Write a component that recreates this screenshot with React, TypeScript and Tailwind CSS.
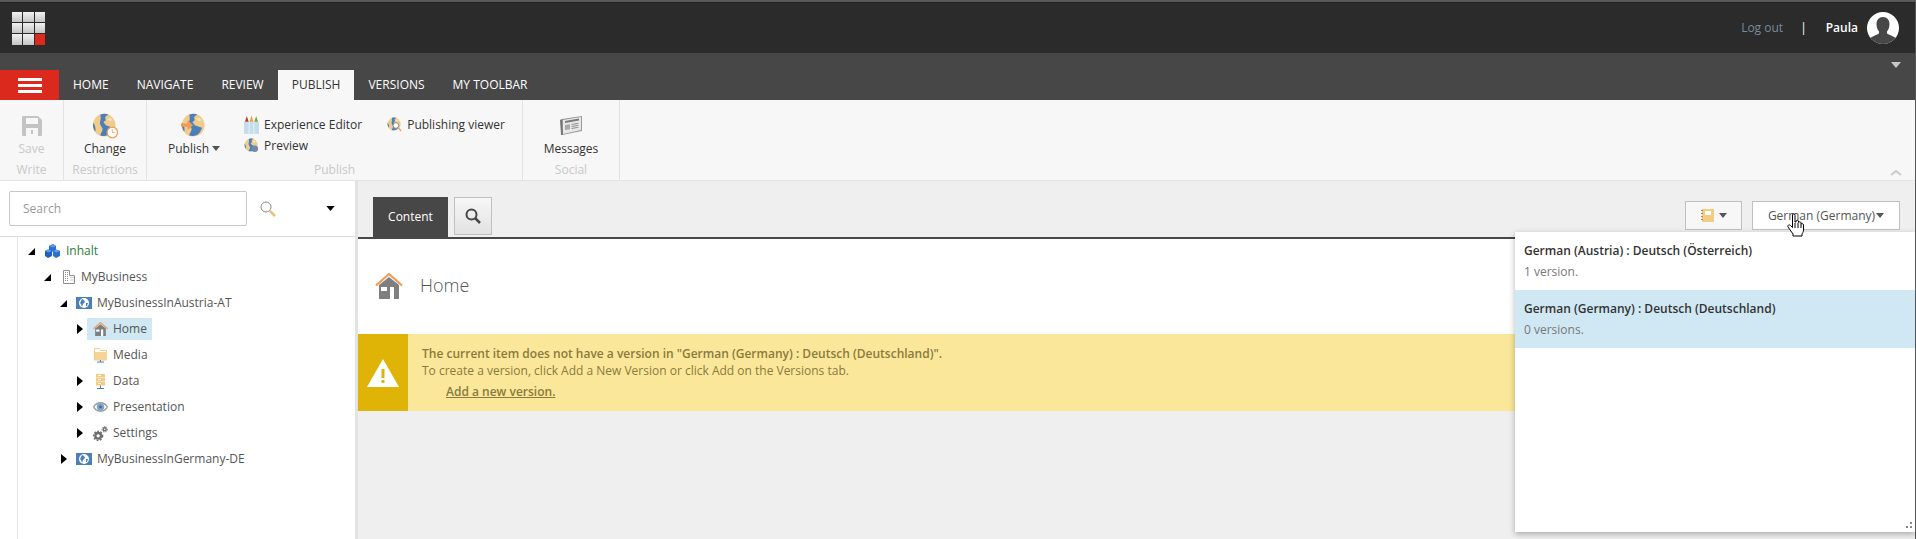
import React from 'react';

const Caret = ({ className = '' }: { className?: string }) => (
  <svg viewBox="0 0 10 6" className={className} fill="currentColor">
    <path d="M0 0h10L5 6z" />
  </svg>
);

const TreeArrow = ({ open }: { open: boolean }) =>
  open ? (
    <svg viewBox="0 0 7 7" className="w-[7px] h-[7px] text-black" fill="currentColor">
      <path d="M7 0v7H0z" />
    </svg>
  ) : (
    <svg viewBox="0 0 6 10" className="w-[6px] h-[10px] text-black" fill="currentColor">
      <path d="M0 0l6 5-6 5z" />
    </svg>
  );

const Globe = ({ className = '', children }: { className?: string; children?: React.ReactNode }) => (
  <svg viewBox="0 0 32 32" className={className}>
    <circle cx="15" cy="15" r="14" fill="#efcb8c" />
    <path d="M10 2c3-1.200 7-1.300 10-.3l-4 3.300 1 4-3 2 3 4 5 2 4 1c-1 3-3 6-5 8-3 2-8 3-11 1.500 1-3 3-5 3-8-1-3-4-5-3-9 1-3 1-6 0-8.500z" fill="#4b7fb9" />
    <path d="M1.500 12c-.8 4 .2 8 2.500 11 1-3 0-8-2.500-11z" fill="#4b7fb9" />
    <path d="M18 7l5-1 2 3-3 1z" fill="#f7e3bd" />
    {children}
  </svg>
);

const GridLogo = () => (
  <div className="grid grid-cols-3 gap-px w-[33px] h-[33px]">
    {[0, 1, 2, 3, 4, 5, 6, 7].map((i) => (
      <div key={i} className="bg-gradient-to-b from-[#f2f2f2] to-[#c4c4c4]" />
    ))}
    <div className="bg-[#dc291e]" />
  </div>
);

const SaveIcon = () => (
  <svg viewBox="0 0 20 20" className="w-[20px] h-[20px]" fill="#c4c4c4">
    <path d="M1 0h15l4 4v15a1 1 0 0 1-1 1H1a1 1 0 0 1-1-1V1a1 1 0 0 1 1-1z" />
    <rect x="4" y="2" width="12" height="6" fill="#f7f7f7" />
    <rect x="4" y="12" width="12" height="8" fill="#f7f7f7" />
    <rect x="9" y="14" width="2" height="4" fill="#c4c4c4" />
  </svg>
);

const Crayons = () => (
  <svg viewBox="0 0 16 20" className="w-[15px] h-[19px]">
    <rect x="0" y="7" width="16" height="13" fill="#c5dcec" />
    <rect x="5" y="7" width="1" height="13" fill="#e8f1f7" />
    <rect x="10" y="7" width="1" height="13" fill="#e8f1f7" />
    <path d="M1 7l2-6 2 6z" fill="#c8352b" />
    <path d="M6 7l2-7 2 7z" fill="#e3a92c" />
    <path d="M11 7l2-6 2 6z" fill="#7fa544" />
  </svg>
);

const NewsIcon = () => (
  <svg viewBox="0 0 24 22" className="w-[24px] h-[22px]">
    <path d="M3 4l20-3 0 15-20 4z" fill="#999" />
    <path d="M1 5l2-1 1 16-2 0z" fill="#777" />
    <path d="M4 5l18-3 0 13-18 4z" fill="#e8e8e8" />
    <path d="M6 6l14-2.500v2L6 8z" fill="#7a7a7a" />
    <path d="M6 10l5-.8v5l-5 .8z" fill="#a8a8a8" />
    <path d="M12.500 9l7-1.200v1l-7 1.200zM12.500 11l7-1.200v1l-7 1.200zM12.500 13l7-1.200v1l-7 1.200z" fill="#909090" />
  </svg>
);

const HomeIcon = ({ className = '' }: { className?: string }) => (
  <svg viewBox="0 0 28 26" className={className}>
    <path d="M4 12L14 4l10 8v14H4z" fill="#7f7f7f" />
    <rect x="6" y="14" width="6" height="4" fill="#fff" />
    <rect x="15" y="14" width="4" height="12" fill="#fff" />
    <path d="M1 12.500L14 1l13 11.500" fill="none" stroke="#ef9b57" strokeWidth="2.200" />
  </svg>
);

const CubesIcon = () => (
  <svg viewBox="0 0 15 14" className="w-[15px] h-[14px]">
    <path d="M4 2l4-2 3 2v4L8 8 4 6z" fill="#2a6fd0" />
    <path d="M0 7l3-1.500L7 7v5l-4 2-3-2z" fill="#1e5fc0" />
    <path d="M8 7l3-1.500L15 7v5l-4 2-3-2z" fill="#2a6fd0" />
    <path d="M4 2l4-2 3 2-3 1.500zM0 7l3-1.500L7 7 3.500 8.500zM8 7l3-1.500L15 7l-3.500 1.500z" fill="#5a9cec" />
  </svg>
);

const BuildingIcon = () => (
  <svg viewBox="0 0 12 14" className="w-[12px] h-[14px]">
    <path d="M.5 .5h6v5h5v8H.5z" fill="#fff" stroke="#8f8f8f" />
    <g fill="#8f8f8f">
      <rect x="2" y="2" width="1" height="1" />
      <rect x="4" y="2" width="1" height="1" />
      <rect x="2" y="4" width="1" height="1" />
      <rect x="4" y="4" width="1" height="1" />
      <rect x="2" y="6" width="1" height="1" />
      <rect x="4" y="6" width="1" height="1" />
      <rect x="7.500" y="7" width="1" height="1" />
      <rect x="9.500" y="7" width="1" height="1" />
      <rect x="2" y="8" width="1" height="1" />
      <rect x="4" y="8" width="1" height="1" />
      <rect x="7.500" y="9.500" width="1" height="1" />
      <rect x="9.500" y="9.500" width="1" height="1" />
      <rect x="2" y="10" width="1" height="1" />
      <rect x="4" y="10" width="1" height="1" />
    </g>
  </svg>
);

const SiteIcon = () => (
  <div className="w-[16px] h-[12px] bg-[#4a7fb9] flex items-center justify-center">
    <svg viewBox="0 0 10 10" className="w-[10px] h-[10px]">
      <circle cx="5" cy="5" r="5" fill="#fff" />
      <path d="M3 1l2 1 1 2-2 2-1 3-1-3-1-1zM7 5l2 0-1 3-1 0z" fill="#4a7fb9" />
    </svg>
  </div>
);

const FolderIcon = () => (
  <svg viewBox="0 0 13 15" className="w-[13px] h-[15px]">
    <path d="M.5 .5h5l1 2h6v9.500H.5z" fill="#fff" stroke="#f3cb82" />
    <path d="M1 4h12v8H1z" fill="#f6d495" />
    <path d="M6 12h1v1.500h3v1H3v-1h3z" fill="#4a7fb9" />
  </svg>
);

const DataIcon = () => (
  <svg viewBox="0 0 10 15" className="w-[10px] h-[15px]">
    <rect x="0" y="0" width="9" height="3.500" fill="#f3cb82" />
    <rect x="0" y="4" width="9" height="3.500" fill="#f3cb82" />
    <rect x="0" y="8" width="9" height="3.500" fill="#f3cb82" />
    <rect x="2" y="1" width="3" height="1" fill="#fff" />
    <rect x="2" y="5" width="3" height="1" fill="#fff" />
    <rect x="2" y="9" width="3" height="1" fill="#fff" />
    <path d="M4 11.500h1V14h3v1H1v-1h3z" fill="#4a7fb9" />
  </svg>
);

const EyeIcon = () => (
  <svg viewBox="0 0 16 12" className="w-[16px] h-[12px]">
    <path d="M0 6c3-7 13-7 16 0-3 7-13 7-16 0z" fill="#9a9a9a" />
    <path d="M1.500 6c3-5 10-5 13 0-3 5-10 5-13 0z" fill="#fff" />
    <circle cx="8" cy="6" r="4" fill="#7fa3c9" />
    <circle cx="8" cy="6" r="1.500" fill="#3f6d9f" />
  </svg>
);

const GearsIcon = () => (
  <svg viewBox="0 0 16 16" className="w-[15px] h-[15px]" fill="none" stroke="#6f6f6f">
    <circle cx="5.500" cy="10.500" r="3" strokeWidth="2.500" />
    <circle cx="5.500" cy="10.500" r="4.800" strokeWidth="1.500" strokeDasharray="2 1.500" />
    <circle cx="12.500" cy="3.500" r="1.600" strokeWidth="1.500" />
    <circle cx="12.500" cy="3.500" r="2.900" strokeWidth="1" strokeDasharray="1.500 1" />
  </svg>
);

const Magnifier = () => (
  <svg viewBox="0 0 16 16" className="w-[16px] h-[16px]" fill="none">
    <circle cx="6" cy="6" r="5" stroke="#8c8c8c" strokeWidth="1" />
    <path d="M10 10l5 5" stroke="#e8c27c" strokeWidth="2.500" />
  </svg>
);

const HandCursor = () => (
  <svg viewBox="0 0 18 24" className="w-[18px] h-[24px]" fill="#fff" stroke="#000" strokeWidth="1">
    <path d="M5.500 1.500c1-1 2.500-.5 2.500 1V9l1 0V8c1-1 2-1 2.500 0v1.500c1-1 2-.8 2.500 0V11c1-.8 2.500-.3 2.500 1v5c0 2-1 3-1.500 4v2h-9v-2L1 14c-.7-1.500 1-3 2.500-1.500l2 2z" />
    <path d="M8 10v5M11 10v5M14 11v4" fill="none" />
  </svg>
);

const tabs = ['HOME', 'NAVIGATE', 'REVIEW', 'PUBLISH', 'VERSIONS', 'MY TOOLBAR'];

const tree = [
  { label: 'Inhalt', indent: 'pl-[28px]', arrow: 'open', icon: <CubesIcon />, text: 'text-[#2a7d3c]', iconBox: 'w-[15px] ml-[10px] mr-[6px]' },
  { label: 'MyBusiness', indent: 'pl-[44px]', arrow: 'open', icon: <BuildingIcon />, text: 'text-[#555]', iconBox: 'w-[12px] ml-[12px] mr-[6px]' },
  { label: 'MyBusinessInAustria-AT', indent: 'pl-[60px]', arrow: 'open', icon: <SiteIcon />, text: 'text-[#555]', iconBox: 'w-[16px] ml-[9px] mr-[5px]' },
  { label: 'Home', indent: 'pl-[76px]', arrow: 'closed', icon: <HomeIcon className="w-[15px] h-[14px]" />, text: 'text-[#555]', iconBox: 'w-[15px] ml-[10px] mr-[5px]', active: true },
  { label: 'Media', indent: 'pl-[76px]', arrow: 'none', icon: <FolderIcon />, text: 'text-[#555]', iconBox: 'w-[15px] ml-[10px] mr-[5px]' },
  { label: 'Data', indent: 'pl-[76px]', arrow: 'closed', icon: <DataIcon />, text: 'text-[#555]', iconBox: 'w-[15px] ml-[10px] mr-[5px]' },
  { label: 'Presentation', indent: 'pl-[76px]', arrow: 'closed', icon: <EyeIcon />, text: 'text-[#555]', iconBox: 'w-[15px] ml-[10px] mr-[5px]' },
  { label: 'Settings', indent: 'pl-[76px]', arrow: 'closed', icon: <GearsIcon />, text: 'text-[#555]', iconBox: 'w-[15px] ml-[10px] mr-[5px]' },
  { label: 'MyBusinessInGermany-DE', indent: 'pl-[60px]', arrow: 'closed', icon: <SiteIcon />, text: 'text-[#555]', iconBox: 'w-[16px] ml-[9px] mr-[5px]' },
];

const RibbonGroup = ({ label, className, children }: { label: string; className: string; children: React.ReactNode }) => (
  <div className={`flex flex-col border-r border-[#e3e3e3] ${className}`}>
    <div className="flex-1 flex">{children}</div>
    <div className="h-[20px] text-center text-[12px] leading-[20px] text-[#c8c8c8]">{label}</div>
  </div>
);

const BigButton = ({ icon, label, className = '' }: { icon: React.ReactNode; label: React.ReactNode; className?: string }) => (
  <div className={`flex flex-col items-center pt-[12px] ${className}`}>
    <div className="h-[27px] flex items-center justify-center">{icon}</div>
    <div className="mt-px text-[12px] leading-[17px] whitespace-nowrap">{label}</div>
  </div>
);

const SmallButton = ({ icon, label }: { icon: React.ReactNode; label: string }) => (
  <div className="flex items-center h-[21px] text-[12px] text-[#333] whitespace-nowrap">
    <div className="w-[16px] mr-[5px] flex justify-center">{icon}</div>
    {label}
  </div>
);

export default function App() {
  return (
    <div className="relative w-[1916px] h-[539px] overflow-hidden flex flex-col bg-[#efefef] border-r border-[#555] font-['Open_Sans',sans-serif]">
      {/* top bar */}
      <div className="h-[3px] bg-[#5a5a5a] border-b border-[#222]" />
      <div className="h-[50px] bg-[#2b2b2b] flex items-center pl-[12px] pr-[16px] shrink-0">
        <GridLogo />
        <div className="ml-auto flex items-center">
          <span className="text-[12px] text-[#7d8a94]">Log out</span>
          <span className="ml-[17px] text-[12px] text-white">|</span>
          <span className="ml-[19px] text-[12px] font-semibold text-white">Paula</span>
          <div className="ml-[9px] w-[32px] h-[32px] rounded-full bg-white overflow-hidden">
            <svg viewBox="0 0 32 32" className="w-[32px] h-[32px]" fill="#474747">
              <path d="M16 5c4 0 6.500 3 6.500 7 0 3-1 5.500-2.500 7.500v2c2 1.500 6 2.500 9 4.500v6H3v-6c3-2 7-3 9-4.500v-2c-1.500-2-2.500-4.500-2.500-7.500 0-4 2.500-7 6.500-7z" />
            </svg>
          </div>
        </div>
      </div>

      {/* ribbon tabs */}
      <div className="relative h-[47px] bg-[#474747] flex items-end shrink-0">
        <div className="w-[59px] h-[30px] bg-[#dc291e] flex flex-col items-center justify-center gap-[3px]">
          <div className="w-[24px] h-[3px] bg-white" />
          <div className="w-[24px] h-[3px] bg-white" />
          <div className="w-[24px] h-[3px] bg-white" />
        </div>
        {tabs.map((t) => (
          <div
            key={t}
            className={
              t === 'PUBLISH'
                ? 'h-[30px] px-[14px] flex items-center text-[12px] bg-[#f7f7f7] text-[#333]'
                : 'h-[30px] px-[14px] flex items-center text-[12px] text-white'
            }
          >
            {t}
          </div>
        ))}
        <Caret className="absolute right-[14px] top-[9px] w-[10px] h-[6px] text-[#c8c8c8]" />
      </div>

      {/* ribbon */}
      <div className="relative h-[81px] bg-[#f7f7f7] border-b border-[#e3e3e3] flex text-[#333] shrink-0">
        <RibbonGroup label="Write" className="w-[64px]">
          <BigButton icon={<SaveIcon />} label={<span className="text-[#c8c8c8]">Save</span>} className="w-full" />
        </RibbonGroup>
        <RibbonGroup label="Restrictions" className="w-[83px]">
          <BigButton
            icon={
              <Globe className="w-[26px] h-[26px]">
                <circle cx="25" cy="24" r="6.500" fill="#fff" stroke="#ef9b57" strokeWidth="1.500" />
                <path d="M25 20v4h3" fill="none" stroke="#ef9b57" />
              </Globe>
            }
            label="Change"
            className="w-full"
          />
        </RibbonGroup>
        <RibbonGroup label="Publish" className="w-[376px]">
          <BigButton
            icon={
              <Globe className="w-[26px] h-[26px]">
                <path d="M0 13h8V9l7 6-7 6v-4H0z" fill="#ef9b57" />
              </Globe>
            }
            label={
              <span className="flex items-center">
                Publish
                <Caret className="ml-[3px] w-[8px] h-[5px] text-[#555]" />
              </span>
            }
            className="ml-[21px]"
          />
          <div className="ml-[23px] pt-[14px] flex flex-col">
            <SmallButton icon={<Crayons />} label="Experience Editor" />
            <SmallButton
              icon={
                <Globe className="w-[15px] h-[15px]">
                  <circle cx="23" cy="23" r="7" fill="#6d8aa8" />
                </Globe>
              }
              label="Preview"
            />
          </div>
          <div className="ml-[24px] pt-[14px]">
            <SmallButton
              icon={
                <Globe className="w-[15px] h-[15px]">
                  <circle cx="19" cy="18" r="6" fill="#fff" stroke="#888" strokeWidth="2" />
                  <path d="M24 23l6 7" stroke="#e8a25a" strokeWidth="3" />
                </Globe>
              }
              label="Publishing viewer"
            />
          </div>
        </RibbonGroup>
        <RibbonGroup label="Social" className="w-[97px]">
          <BigButton icon={<NewsIcon />} label="Messages" className="w-full" />
        </RibbonGroup>
        <svg viewBox="0 0 12 7" className="absolute right-[13px] top-[69px] w-[12px] h-[7px]" fill="none" stroke="#c8c8c8" strokeWidth="2">
          <path d="M1 6l5-4 5 4" />
        </svg>
      </div>

      {/* main */}
      <div className="flex-1 flex min-h-0">
        <div className="w-[358px] shrink-0 bg-white border-r-[3px] border-[#e3e3e3] flex flex-col">
          <div className="h-[56px] shrink-0 border-b border-[#dcdcdc] flex items-center pl-[9px]">
            <div className="w-[238px] h-[35px] border border-[#c8c8c8] rounded-[2px] flex items-center pl-[13px] text-[12px] text-[#999]">
              Search
            </div>
            <div className="ml-[13px]">
              <Magnifier />
            </div>
            <Caret className="ml-[50px] w-[9px] h-[5px] text-black" />
          </div>
          <div className="flex-1 relative pt-px">
            <div className="absolute left-[17px] top-0 bottom-0 w-px bg-[#e3e3e3]" />
            {tree.map((n) => (
              <div key={n.label} className={`h-[26px] flex items-center ${n.indent}`}>
                <div className="w-[7px] flex justify-center">
                  {n.arrow === 'open' && <TreeArrow open />}
                  {n.arrow === 'closed' && <TreeArrow open={false} />}
                </div>
                {n.active ? (
                  <div className="ml-[4px] h-[22px] pl-[6px] pr-[5px] bg-[#d0e8f4] flex items-center">
                    <div className="w-[15px] mr-[5px] flex justify-center">{n.icon}</div>
                    <span className={`text-[12px] ${n.text}`}>{n.label}</span>
                  </div>
                ) : (
                  <>
                    <div className={`flex justify-center ${n.iconBox}`}>{n.icon}</div>
                    <span className={`text-[12px] whitespace-nowrap ${n.text}`}>{n.label}</span>
                  </>
                )}
              </div>
            ))}
          </div>
        </div>

        <div className="flex-1 flex flex-col min-w-0">
          <div className="h-[56px] shrink-0 flex items-end pl-[15px] pr-[15px] border-b-2 border-[#474747] box-content">
            <div className="w-[75px] h-[40px] bg-[#474747] text-white text-[12px] flex items-center justify-center">Content</div>
            <div className="ml-[6px] mb-[2px] w-[38px] h-[38px] border border-[#c0c0c0] bg-gradient-to-b from-[#f7f7f7] to-[#e2e2e2] flex items-center justify-center">
              <svg viewBox="0 0 16 16" className="w-[16px] h-[16px]" fill="none" stroke="#474747">
                <circle cx="6.500" cy="6.500" r="5" strokeWidth="2" />
                <path d="M10 10l5 5" strokeWidth="2.500" />
              </svg>
            </div>
            <div className="ml-auto self-start mt-[20px] flex">
              <div className="w-[57px] h-[29px] border border-[#c0c0c0] bg-[#f7f7f7] flex items-center justify-center gap-[5px]">
                <svg viewBox="0 0 13 13" className="w-[13px] h-[13px]">
                  <rect x="1" width="12" height="13" fill="#f3cb82" />
                  <path d="M0 1h2v1H0zM0 4h2v1H0zM0 7h2v1H0zM0 10h2v1H0z" fill="#a98a52" />
                  <rect x="4" y="2" width="6" height="4" fill="#fff" />
                </svg>
                <Caret className="w-[8px] h-[5px] text-[#555]" />
              </div>
              <div className="ml-[10px] w-[148px] h-[29px] border border-[#c0c0c0] bg-white flex items-center justify-center text-[12px] text-[#555] gap-[1px]">
                German (Germany)
                <Caret className="w-[8px] h-[5px] text-[#555]" />
              </div>
            </div>
          </div>

          <div className="h-[95px] shrink-0 bg-white flex items-center pl-[17px]">
            <HomeIcon className="w-[28px] h-[26px] -mt-[2px]" />
            <span className="ml-[17px] -mt-[2px] text-[18px] text-[#555] font-light">Home</span>
          </div>

          <div className="h-[77px] shrink-0 bg-[#fbe799] flex">
            <div className="w-[50px] bg-[#e0b406] flex items-center justify-center">
              <svg viewBox="0 0 32 28" className="w-[32px] h-[28px]">
                <path d="M16 0l16 28H0z" fill="#fff" />
                <rect x="14.500" y="10" width="3" height="9" fill="#e0b406" />
                <rect x="14.500" y="21" width="3" height="3" fill="#e0b406" />
              </svg>
            </div>
            <div className="pl-[14px] pt-[11px] text-[12px] text-[#8a7a3c]">
              <div className="leading-[17px] font-semibold">The current item does not have a version in "German (Germany) : Deutsch (Deutschland)".</div>
              <div className="leading-[17px]">To create a version, click Add a New Version or click Add on the Versions tab.</div>
              <div className="mt-[4px] ml-[24px] leading-[17px] font-semibold underline">Add a new version.</div>
            </div>
          </div>
        </div>
      </div>

      {/* language dropdown */}
      <div className="absolute left-[1515px] top-[232px] w-[400px] h-[300px] bg-white shadow-[0_2px_6px_rgba(0,0,0,0.3)]">
        <div className="h-[58px] pl-[9px] pt-[10px]">
          <div className="text-[12px] leading-[18px] font-semibold text-[#333]">German (Austria) : Deutsch (Österreich)</div>
          <div className="mt-[3px] text-[12px] leading-[18px] text-[#777]">1 version.</div>
        </div>
        <div className="h-[58px] pl-[9px] pt-[10px] bg-[#d0e8f4]">
          <div className="text-[12px] leading-[18px] font-semibold text-[#333]">German (Germany) : Deutsch (Deutschland)</div>
          <div className="mt-[3px] text-[12px] leading-[18px] text-[#777]">0 versions.</div>
        </div>
        <svg viewBox="0 0 6 6" className="absolute right-[3px] bottom-[4px] w-[6px] h-[6px]" fill="#888">
          <rect x="4" y="0" width="2" height="2" />
          <rect x="0" y="4" width="2" height="2" />
          <rect x="4" y="4" width="2" height="2" />
        </svg>
      </div>

      <div className="absolute left-[1787px] top-[213px]">
        <HandCursor />
      </div>
    </div>
  );
}
